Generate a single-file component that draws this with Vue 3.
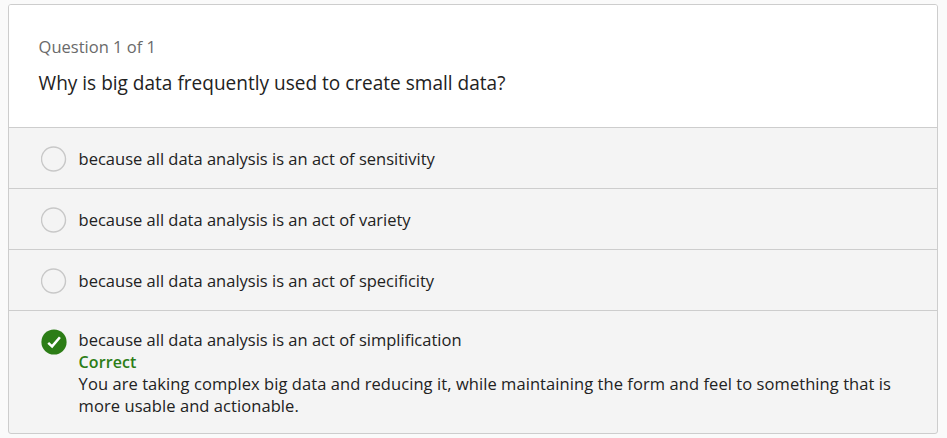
<script setup>
const options = [
  { text: 'because all data analysis is an act of sensitivity', key: 'sensitivity' },
  { text: 'because all data analysis is an act of variety', key: 'variety' },
  { text: 'because all data analysis is an act of specificity', key: 'specificity' },
  {
    text: 'because all data analysis is an act of simplification',
    key: 'simplification',
    correct: true,
    feedback: [
      'You are taking complex big data and reducing it, while maintaining the form and feel to something that is',
      'more usable and actionable.',
    ],
  },
]
</script>

<template>
  <main class="page">
    <section class="card">
      <header class="head">
        <div class="count">Question 1 of 1</div>
        <h1 class="title">Why is big data frequently used to create small data?</h1>
      </header>
      <div v-for="o in options" :key="o.key" class="option" :class="{ answered: o.correct }">
        <svg v-if="o.correct" class="mark" viewBox="0 0 26 26">
          <circle cx="13" cy="13" r="12.6" fill="#2c7d16" />
          <path d="M7.2 13.8 11.1 17.4 18.9 8.2" fill="none" stroke="#fff" stroke-width="2.5" />
        </svg>
        <svg v-else class="mark" viewBox="0 0 26 26">
          <circle cx="12.5" cy="13" r="12" fill="#f4f4f4" stroke="#c8c8c8" stroke-width="1.4" />
        </svg>
        <div class="body">
          <div class="text">{{ o.text }}</div>
          <template v-if="o.correct">
            <div class="correct">Correct</div>
            <div v-for="line in o.feedback" :key="line" class="text feedback">{{ line }}</div>
          </template>
        </div>
      </div>
    </section>
  </main>
</template>

<style>
body {
  background: #fafafa;
}
</style>

<style scoped>
.page {
  height: 438px;
  box-sizing: border-box;
  padding: 4px 9px 4px 8px;
  background: #fafafa;
  font-family: 'Open Sans', 'Noto Sans', sans-serif;
  color: #222;
}
.card {
  height: 430px;
  box-sizing: border-box;
  border: 1px solid #cdcdcd;
  border-radius: 3px;
  background: #f4f4f4;
  overflow: hidden;
}
.head {
  height: 122px;
  box-sizing: border-box;
  padding: 30px 30px 0 29.6px;
  background: #fff;
}
.count {
  font-size: 16.5px;
  line-height: 24px;
  color: #6a6a6a;
  white-space: nowrap;
}
.title {
  margin: 10px 0 0;
  font-size: 19.05px;
  line-height: 28px;
  font-weight: 400;
  white-space: nowrap;
}
.option {
  height: 61px;
  box-sizing: border-box;
  display: flex;
  align-items: flex-start;
  border-top: 1px solid #cdcdcd;
  padding: 18px 30px 0 32px;
}
.option.answered {
  height: 123px;
}
.mark {
  width: 26px;
  height: 26px;
  flex: none;
}
.body {
  padding: 2px 0 0 11.6px;
}
.answered .body {
  padding-top: 0;
}
.text,
.correct {
  font-size: 16.5px;
  line-height: 22px;
  white-space: nowrap;
}
.feedback {
  letter-spacing: 0.07px;
}
.correct {
  font-weight: 600;
}
.correct {
  font-size: 16px;
  letter-spacing: 0.1px;
  color: #2c7d16;
}
</style>
